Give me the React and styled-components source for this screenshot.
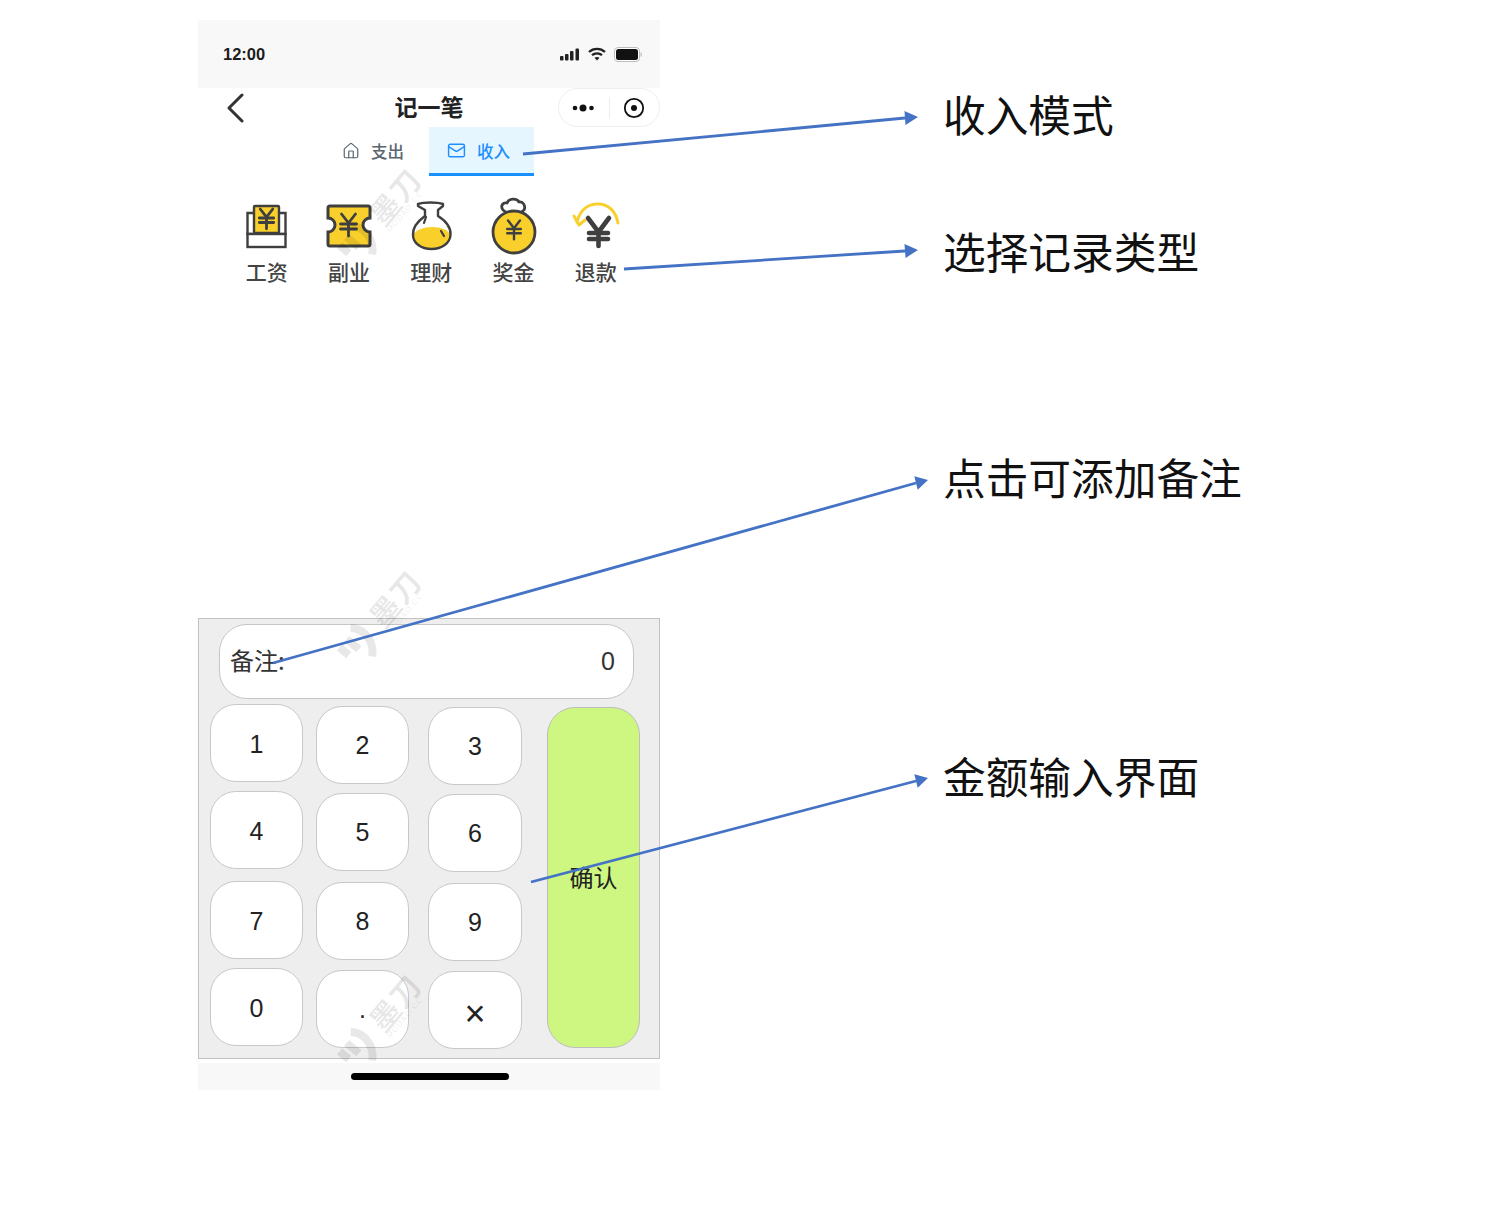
import styled, { createGlobalStyle } from 'styled-components';
import { House, Mail } from 'lucide-react';

const CJK = `"Noto Sans CJK SC", "Noto Sans", sans-serif`;
const YELLOW = '#f9d02b';
const DARK = '#3f3f3f';

const GlobalStyle = createGlobalStyle`
  html, body {
    margin: 0;
    background: #fff;
  }
  * {
    box-sizing: border-box;
  }
`;

const Page = styled.div`
  position: relative;
  display: flex;
  width: 1501px;
  height: 1212px;
  padding: 20px 0 0 198px;
  overflow: hidden;
  font-family: ${CJK};
`;

const Phone = styled.div`
  display: flex;
  flex-direction: column;
  width: 462px;
  flex: none;
`;

const StatusBar = styled.div`
  display: flex;
  align-items: center;
  justify-content: space-between;
  height: 68px;
  padding: 0 18px 0 25px;
  background: #f8f8f8;
`;

const Time = styled.span`
  font-family: "Liberation Sans", sans-serif;
  font-size: 16.5px;
  font-weight: 700;
  color: #1c1c1c;
`;

const StatusIcons = styled.div`
  display: flex;
  align-items: center;
  gap: 8px;
`;

const NavBar = styled.div`
  position: relative;
  display: flex;
  align-items: center;
  justify-content: space-between;
  height: 39px;
  padding-left: 28px;
`;

const Title = styled.h1`
  position: absolute;
  top: 0;
  left: 0;
  right: 0;
  margin: 0;
  text-align: center;
  font-size: 23px;
  font-weight: 600;
  line-height: 37px;
  color: #222;
`;

const Capsule = styled.div`
  display: flex;
  align-items: center;
  width: 102px;
  height: 39px;
  border: 1px solid #eeeeee;
  border-radius: 20px;
  background: #fff;
`;

const CapsulePart = styled.div`
  display: flex;
  flex: 1;
  align-items: center;
  justify-content: center;
  height: 22px;
  border-left: ${props => (props.$divided ? '1px solid #eeeeee' : 'none')};
`;

const Tabs = styled.div`
  display: flex;
  justify-content: center;
  height: 49px;
`;

const Tab = styled.div`
  display: flex;
  align-items: center;
  gap: 11px;
  width: 105px;
  height: 49px;
  padding: 1px 0 0 18px;
  font-size: 16.5px;
  font-weight: 500;
  color: ${props => (props.$active ? '#1f8fff' : '#5a6670')};
  background: ${props => (props.$active ? '#e6f6ff' : 'transparent')};
  border-bottom: 3px solid ${props => (props.$active ? '#1890ff' : 'transparent')};
`;

const Categories = styled.div`
  display: flex;
  padding: 20px 0 0 27.500px;
`;

const Category = styled.div`
  display: flex;
  flex-direction: column;
  align-items: center;
  width: 82.300px;
`;

const CategoryIcon = styled.div`
  margin-left: -1.500px;
`;

const CategoryLabel = styled.span`
  margin-top: -2px;
  font-size: 21px;
  font-weight: 500;
  line-height: 34px;
  color: #444;
`;

const Panel = styled.div`
  height: 441px;
  margin-top: 330px;
  padding-top: 5px;
  background: #eeeeee;
  border: 1px solid #c2c2c2;
`;

const Remark = styled.div`
  display: flex;
  align-items: center;
  justify-content: space-between;
  width: 415px;
  height: 75px;
  margin-left: 20px;
  padding: 0 18px 0 10px;
  font-size: 24px;
  color: #333;
  background: #fff;
  border: 1px solid #c6c6c6;
  border-radius: 28px;
`;

const RemarkLabel = styled.span`
  margin-bottom: 5px;
`;

const RemarkValue = styled.span`
  font-family: "Liberation Sans", sans-serif;
  font-size: 25px;
`;

const KeyArea = styled.div`
  display: flex;
  margin-top: 5px;
  padding-left: 11px;
`;

const KeyColumn = styled.div`
  display: flex;
  flex-direction: column;
  margin-left: ${props => props.$left}px;
  padding-top: ${props => props.$top}px;
`;

const Key = styled.div`
  display: flex;
  align-items: center;
  justify-content: center;
  width: ${props => props.$width}px;
  height: 78px;
  margin-top: ${props => props.$gap}px;
  padding-top: ${props => (props.$large ? 7 : props.$nudge)}px;
  font-family: "Liberation Sans", sans-serif;
  font-size: ${props => (props.$large ? 36 : 25)}px;
  color: #222;
  background: #fff;
  border: 1px solid #c8c8c8;
  border-radius: 26px;
`;

const Confirm = styled.div`
  display: flex;
  align-items: center;
  justify-content: center;
  width: 93px;
  height: 341px;
  margin: 3px 0 0 25px;
  padding-bottom: 2px;
  font-size: 24px;
  color: #222;
  background: #cdf781;
  border: 1px solid #bdbdbd;
  border-radius: 28px;
`;

const HomeArea = styled.div`
  display: flex;
  justify-content: center;
  height: 27px;
  margin-top: 4px;
  padding: 10px 0 0 1px;
  background: #f8f8f8;
`;

const HomeBar = styled.div`
  width: 158px;
  height: 7px;
  background: #000;
  border-radius: 4px;
`;

const Notes = styled.div`
  display: flex;
  flex-direction: column;
  margin-left: 283px;
`;

const Note = styled.div`
  margin-top: ${props => props.$gap}px;
  font-size: 42.700px;
  line-height: 60px;
  color: #111;
  white-space: nowrap;
`;

const Watermark = styled.div`
  position: absolute;
  left: ${props => props.$x - 60}px;
  top: ${props => props.$y - 25}px;
  display: flex;
  align-items: center;
  width: 120px;
  height: 50px;
  transform: rotate(-50deg);
  color: rgba(0, 0, 0, 0.09);
  pointer-events: none;
`;

const WatermarkText = styled.div`
  display: flex;
  flex-direction: column;
  margin-left: 8px;
  line-height: 1;
`;

const WatermarkName = styled.span`
  font-size: 30px;
  font-weight: 700;
  letter-spacing: 1px;
`;

const WatermarkSite = styled.span`
  font-family: "Liberation Sans", sans-serif;
  font-size: 8px;
  letter-spacing: 1px;
`;

const ArrowLayer = styled.svg`
  position: absolute;
  left: 0;
  top: 0;
  pointer-events: none;
`;

const Icon = styled.svg`
  display: block;
  flex: none;
`;

function Yen({ x, y, size = 1, width = 2.800 }) {
  const s = size;
  return (
    <g stroke={DARK} strokeWidth={width} fill="none" strokeLinecap="round" strokeLinejoin="round">
      <path d={`M${x - 7 * s} ${y - 10 * s}L${x} ${y - 1 * s}L${x + 7 * s} ${y - 10 * s}`} />
      <path d={`M${x - 8 * s} ${y}H${x + 8 * s}M${x - 8 * s} ${y + 5 * s}H${x + 8 * s}M${x} ${y - 1 * s}V${y + 12 * s}`} />
    </g>
  );
}

function SalaryIcon() {
  return (
    <Icon width="60" height="60" viewBox="0 0 60 60">
      <path d="M11.500 17H49.500V38H11.500Z" fill="#fff" stroke={DARK} strokeWidth="2.400" />
      <rect x="18" y="10" width="25" height="27" fill={YELLOW} stroke={DARK} strokeWidth="2.400" rx="1" />
      <Yen x={30.500} y={22} size={0.9} />
      <rect x="11.500" y="38" width="38" height="13" fill="#fff" stroke={DARK} strokeWidth="2.400" />
    </Icon>
  );
}

function SideJobIcon() {
  return (
    <Icon width="60" height="60" viewBox="0 0 60 60">
      <path
        d="M12 10H50A2 2 0 0 1 52 12V22A7 7 0 0 0 52 36V48A2 2 0 0 1 50 50H12A2 2 0 0 1 10 48V36A7 7 0 0 0 10 22V12A2 2 0 0 1 12 10Z"
        fill={YELLOW}
        stroke={DARK}
        strokeWidth="3"
      />
      <Yen x={30.500} y={28} />
    </Icon>
  );
}

function FinanceIcon() {
  return (
    <Icon width="60" height="60" viewBox="0 0 60 60">
      <path
        d="M13.500 39C15 34 24 31 32 31C41 31 49 34 50 39C50.500 47 42 53 31.500 53C21 53 13 47 13.500 39Z"
        fill={YELLOW}
      />
      <path
        d="M18 8C24 6 37 6 43 8V10L38 14V20C46 25 51 32 50.500 39C50 47 42 53 31.500 53C21 53 13 47 13 39C12.500 32 18 25 25 20V14L18 10Z"
        fill="none"
        stroke={DARK}
        strokeWidth="2.400"
        strokeLinejoin="round"
      />
      <path d="M26 21L24 27M41 35L44 40" fill="none" stroke={DARK} strokeWidth="2.200" strokeLinecap="round" />
    </Icon>
  );
}

function BonusIcon() {
  return (
    <Icon width="60" height="60" viewBox="0 0 60 60">
      <path
        d="M20 14C17 10 20 6 24 7C26 2 34 2 36 6C40 5 43 10 41 14L37 17H24Z"
        fill="#fff"
        stroke={DARK}
        strokeWidth="2.800"
        strokeLinejoin="round"
      />
      <circle cx="31" cy="36" r="21" fill={YELLOW} stroke={DARK} strokeWidth="2.800" />
      <Yen x={31} y={33} size={0.85} width={2.400} />
    </Icon>
  );
}

function RefundIcon() {
  return (
    <Icon width="60" height="60" viewBox="0 0 60 60">
      <path d="M12 26C15 14 23 8 33 8C44 8 51 16 53 27" fill="none" stroke={YELLOW} strokeWidth="3" strokeLinecap="round" />
      <path d="M9 20L14 29L20 24" fill="none" stroke={YELLOW} strokeWidth="3" strokeLinecap="round" strokeLinejoin="round" />
      <path d="M23 22L33.500 36L44 22M24 37H43M24 43H43M33.500 36V50" fill="none" stroke={DARK} strokeWidth="4.600" strokeLinecap="round" strokeLinejoin="round" />
    </Icon>
  );
}

function SignalIcon() {
  return (
    <Icon width="20" height="13" viewBox="0 0 20 13" fill="#222">
      <rect x="0" y="8" width="3.500" height="4.500" rx="1" />
      <rect x="5" y="6" width="3.500" height="6.500" rx="1" />
      <rect x="10" y="3" width="3.500" height="9.500" rx="1" />
      <rect x="15.500" y="0.500" width="3.500" height="12" rx="1" />
    </Icon>
  );
}

function WifiIcon() {
  return (
    <Icon width="18" height="14" viewBox="0 0 18 14" fill="none" stroke="#222" strokeWidth="2.300">
      <path d="M1 5C5.500 0.800 12.500 0.800 17 5" />
      <path d="M4 8.200C6.800 5.700 11.200 5.700 14 8.200" />
      <path d="M9 13.500L6.500 10.800C8 9.700 10 9.700 11.500 10.800Z" fill="#222" stroke="none" />
    </Icon>
  );
}

function BatteryIcon() {
  return (
    <Icon width="28" height="15" viewBox="0 0 28 15">
      <rect x="0.500" y="0.500" width="25" height="14" rx="3.500" fill="#fff" stroke="#bdbdbd" />
      <rect x="2" y="2" width="22" height="11" rx="2.500" fill="#111" />
      <rect x="26.500" y="5.500" width="1.200" height="4" fill="#bdbdbd" />
    </Icon>
  );
}

function BackIcon() {
  return (
    <Icon width="20" height="30" viewBox="0 0 20 30" fill="none" stroke="#333" strokeWidth="3" strokeLinecap="round" strokeLinejoin="round">
      <path d="M16 2L3 15L16 28" />
    </Icon>
  );
}

function MoreIcon() {
  return (
    <Icon width="24" height="10" viewBox="0 0 24 10" fill="#111">
      <circle cx="3" cy="5" r="2.300" />
      <circle cx="11" cy="5" r="3.500" />
      <circle cx="19.500" cy="5" r="2.300" />
    </Icon>
  );
}

function TargetIcon() {
  return (
    <Icon width="22" height="22" viewBox="0 0 22 22">
      <circle cx="11" cy="11" r="9.200" fill="none" stroke="#111" strokeWidth="1.800" />
      <circle cx="11" cy="11" r="3" fill="#111" />
    </Icon>
  );
}

function WatermarkLogo() {
  return (
    <Icon width="40" height="40" viewBox="0 0 40 40" fill="none" stroke="currentColor" strokeWidth="8">
      <path d="M6 6V18M17 6V22M28 2C36 12 34 28 20 37" />
    </Icon>
  );
}

const categories = [
  { label: '工资', icon: <SalaryIcon /> },
  { label: '副业', icon: <SideJobIcon /> },
  { label: '理财', icon: <FinanceIcon /> },
  { label: '奖金', icon: <BonusIcon /> },
  { label: '退款', icon: <RefundIcon /> },
];

const keyColumns = [
  { left: 0, top: 0, width: 93, nudge: 2, gaps: [0, 9, 12, 9], keys: ['1', '4', '7', '0'] },
  { left: 13, top: 2, width: 93, nudge: 1, gaps: [0, 9, 11, 10], keys: ['2', '5', '8', '.'] },
  { left: 19, top: 3, width: 94, nudge: 1, gaps: [0, 9, 11, 10], keys: ['3', '6', '9', '×'] },
];

const notes = [
  { text: '收入模式', gap: 63 },
  { text: '选择记录类型', gap: 77 },
  { text: '点击可添加备注', gap: 166 },
  { text: '金额输入界面', gap: 239 },
];

const arrows = [
  { from: [523, 154], to: [905, 118], tip: [918, 117] },
  { from: [624, 269], to: [905, 251], tip: [918, 250] },
  { from: [273, 663], to: [916, 483], tip: [928, 480] },
  { from: [531, 882], to: [916, 781], tip: [928, 778] },
];

function arrowHead(to, tip) {
  const dx = tip[0] - to[0];
  const dy = tip[1] - to[1];
  const len = Math.hypot(dx, dy);
  const nx = (-dy / len) * 7;
  const ny = (dx / len) * 7;
  return `${tip[0]},${tip[1]} ${to[0] + nx},${to[1] + ny} ${to[0] - nx},${to[1] - ny}`;
}

export default function App() {
  return (
    <Page>
      <GlobalStyle />
      <Phone>
        <StatusBar>
          <Time>12:00</Time>
          <StatusIcons>
            <SignalIcon />
            <WifiIcon />
            <BatteryIcon />
          </StatusIcons>
        </StatusBar>
        <NavBar>
          <BackIcon />
          <Title>记一笔</Title>
          <Capsule>
            <CapsulePart>
              <MoreIcon />
            </CapsulePart>
            <CapsulePart $divided>
              <TargetIcon />
            </CapsulePart>
          </Capsule>
        </NavBar>
        <Tabs>
          <Tab>
            <House size={18} strokeWidth={1.600} />
            支出
          </Tab>
          <Tab $active>
            <Mail size={19} strokeWidth={1.800} />
            收入
          </Tab>
        </Tabs>
        <Categories>
          {categories.map(item => (
            <Category key={item.label}>
              <CategoryIcon>{item.icon}</CategoryIcon>
              <CategoryLabel>{item.label}</CategoryLabel>
            </Category>
          ))}
        </Categories>
        <Panel>
          <Remark>
            <RemarkLabel>备注:</RemarkLabel>
            <RemarkValue>0</RemarkValue>
          </Remark>
          <KeyArea>
            {keyColumns.map(column => (
              <KeyColumn key={column.keys[0]} $left={column.left} $top={column.top}>
                {column.keys.map((label, i) => (
                  <Key
                    key={label}
                    $width={column.width}
                    $gap={column.gaps[i]}
                    $nudge={column.nudge}
                    $large={label === '×'}
                  >
                    {label}
                  </Key>
                ))}
              </KeyColumn>
            ))}
            <Confirm>确认</Confirm>
          </KeyArea>
        </Panel>
        <HomeArea>
          <HomeBar />
        </HomeArea>
      </Phone>
      <Notes>
        {notes.map(note => (
          <Note key={note.text} $gap={note.gap}>
            {note.text}
          </Note>
        ))}
      </Notes>
      {[216, 618, 1022].map(y => (
        <Watermark key={y} $x={385} $y={y - 3}>
          <WatermarkLogo />
          <WatermarkText>
            <WatermarkName>墨刀</WatermarkName>
            <WatermarkSite>MODAO.CC</WatermarkSite>
          </WatermarkText>
        </Watermark>
      ))}
      <ArrowLayer width="1501" height="1212" viewBox="0 0 1501 1212">
        {arrows.map(arrow => (
          <g key={arrow.tip[1]}>
            <line
              x1={arrow.from[0]}
              y1={arrow.from[1]}
              x2={arrow.to[0]}
              y2={arrow.to[1]}
              stroke="#4472c4"
              strokeWidth="2.800"
            />
            <polygon points={arrowHead(arrow.to, arrow.tip)} fill="#4472c4" />
          </g>
        ))}
      </ArrowLayer>
    </Page>
  );
}
